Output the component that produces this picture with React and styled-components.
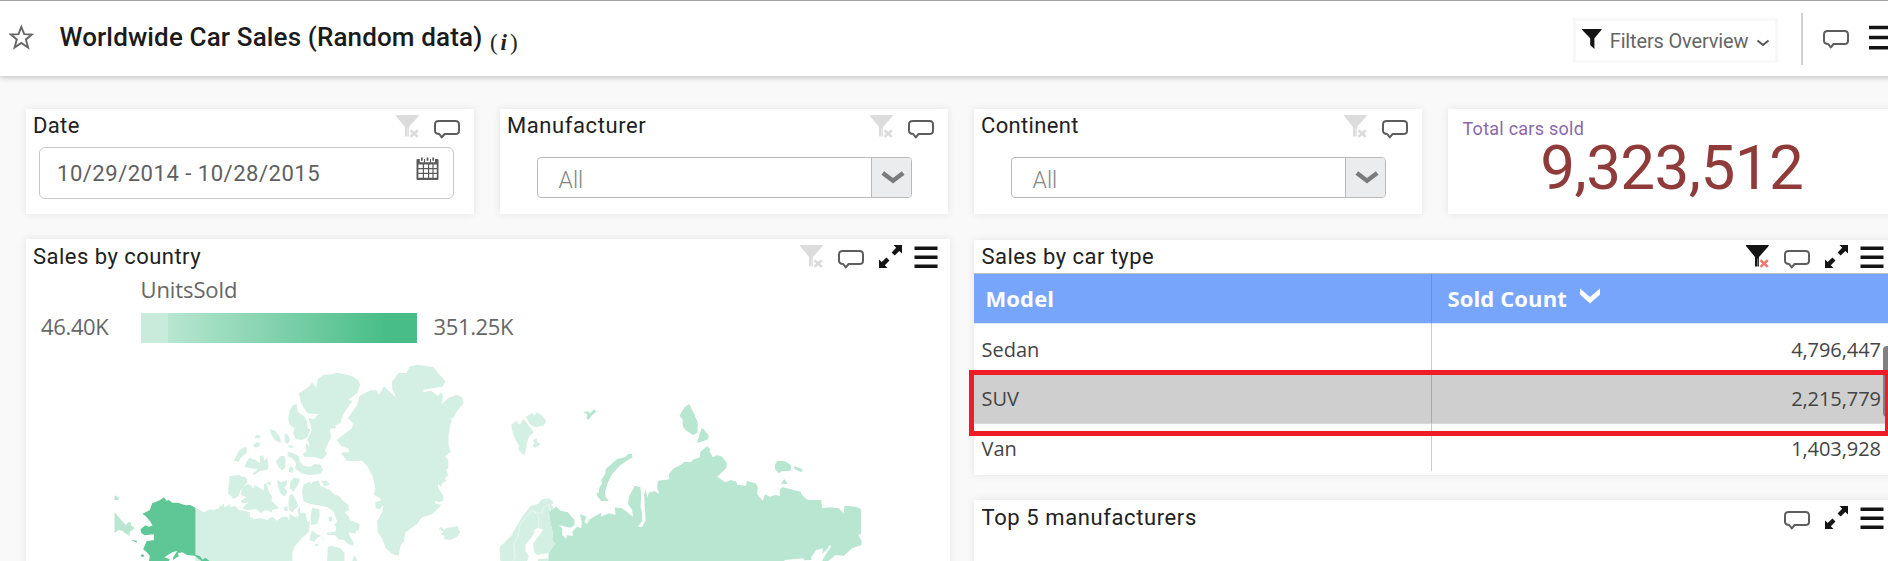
import React from 'react';
import styled, { createGlobalStyle } from 'styled-components';

const GlobalStyle = createGlobalStyle`
  * { box-sizing: border-box; }
  html, body { margin: 0; padding: 0; overflow: hidden; background: #f9f9f9; }
  body { font-family: Roboto, "Liberation Sans", sans-serif; color: #212121; }
  svg { display: block; flex: none; }
`;

const Page = styled.div`
  width: 1888px;
  height: 561px;
  overflow: hidden;
  display: flex;
  flex-direction: column;
  background: #f9f9f9;
`;

const TopBar = styled.header`
  flex: none;
  width: 1905px;
  height: 76px;
  display: flex;
  align-items: flex-start;
  padding: 0 12px 0 9px;
  background: #fff;
  border-top: 1px solid #a3a3a3;
  box-shadow: 0 2px 5px rgba(0, 0, 0, 0.2);
`;

const StarSlot = styled.div`
  margin: 23px 25.5px 0 0;
`;

const PageTitle = styled.h1`
  margin: 17px 0 0;
  flex: none;
  font-size: 26px;
  line-height: 38px;
  font-weight: 500;
  letter-spacing: 0.14px;
  color: #1b1b1b;
  white-space: nowrap;
`;

const InfoMark = styled.span`
  flex: 1;
  margin: 28px 0 0 7.5px;
  font-family: "Liberation Serif", serif;
  font-size: 23px;
  line-height: 28px;
  letter-spacing: 3px;
  color: #222;
  em { font-weight: 700; }
`;

const FiltersButton = styled.button`
  margin: 17px 23px 0 0;
  width: 205px;
  height: 45px;
  padding: 0 5px 0 6px;
  display: flex;
  align-items: center;
  gap: 6px;
  border: 3px solid #f8f8f8;
  background: #fff;
  font: 400 20px/24px Roboto, sans-serif;
  letter-spacing: -0.16px;
  color: #666;
  white-space: nowrap;
`;

const FiltersLabel = styled.span`
  flex: 1;
  padding-top: 1px;
`;

const ChevronSlot = styled.span`
  padding-top: 4px;
`;

const FunnelSlot = styled.span`
  padding-bottom: 3px;
`;

const Divider = styled.div`
  width: 2px;
  height: 52px;
  margin: 12px 20px 0 0;
  background: #d2d2d2;
`;

const BarIcon = styled.div`
  margin: ${(p) => p.$top}px ${(p) => p.$right || 0}px 0 0;
`;

const Board = styled.main`
  flex: 1;
  display: flex;
  flex-direction: column;
  gap: 25px;
  padding: 33px 0 0 25.5px;
  width: 1905px;
`;

const CardRow = styled.section`
  display: flex;
  align-items: flex-start;
  gap: ${(p) => p.$gap}px;
`;

const Stack = styled.div`
  display: flex;
  flex-direction: column;
  gap: 25px;
  padding-top: 1px;
`;

const Card = styled.article`
  flex: none;
  width: ${(p) => p.$width}px;
  height: ${(p) => p.$height}px;
  background: #fff;
  box-shadow: 0 0 8px rgba(0, 0, 0, 0.09);
`;

const CardHead = styled.div`
  display: flex;
  align-items: flex-start;
  height: ${(p) => p.$height || 34}px;
  padding: 0 ${(p) => p.$right || 12}px 0 7.5px;
`;

const CardTitle = styled.h2`
  flex: 1;
  margin: 0;
  padding-top: ${(p) => p.$shift || 0}px;
  font-size: 22px;
  line-height: 33px;
  font-weight: 400;
  letter-spacing: ${(p) => p.$track || 0.35}px;
  white-space: nowrap;
`;

const IconSlot = styled.div`
  margin: ${(p) => p.$top}px 0 0 ${(p) => p.$left || 0}px;
`;

const DateField = styled.div`
  margin: 4px 20px 0 13.5px;
  height: 52px;
  display: flex;
  align-items: flex-start;
  justify-content: space-between;
  padding: 9px 14px 0 17px;
  border: 1.5px solid #c9c9c9;
  border-radius: 6px;
  font-size: 22px;
  line-height: 34px;
  letter-spacing: 0.52px;
  color: #606060;
`;

const SelectField = styled.div`
  margin: 14px 36px 0 37px;
  height: 41px;
  display: flex;
  border: 1.5px solid #b9b9b9;
  border-radius: 4px;
  overflow: hidden;
`;

const SelectValue = styled.span`
  flex: 1;
  padding: 2px 0 0 21px;
  font-size: 23px;
  line-height: 41px;
  font-weight: 300;
  color: #858585;
`;

const SelectToggle = styled.span`
  width: 40px;
  padding: 13px 0 0 9px;
  border-left: 1.5px solid #b9b9b9;
  background: #ebecee;
`;

const KpiCaption = styled.div`
  padding: 9px 0 0 15px;
  font-size: 18px;
  line-height: 22px;
  letter-spacing: 0.25px;
  color: #8a69ab;
`;

const KpiValue = styled.div`
  font-size: 62px;
  line-height: 56px;
  text-align: center;
  letter-spacing: -0.6px;
  color: #8f3b3a;
`;

const Legend = styled.div`
  font-family: "Open Sans", "Noto Sans", sans-serif;
  font-size: 22px;
  color: #666;
  padding-left: 15px;
`;

const LegendName = styled.div`
  padding-left: 100px;
  line-height: 30px;
  height: 40px;
  padding-top: 1px;
  letter-spacing: -0.1px;
`;

const LegendScale = styled.div`
  display: flex;
  align-items: center;
  height: 30px;
`;

const ScaleEnd = styled.span`
  width: ${(p) => p.$width}px;
  padding-left: ${(p) => p.$inset || 0}px;
  line-height: 30px;
  padding-bottom: 4px;
  letter-spacing: -0.35px;
`;

const ScaleBar = styled.span`
  width: 276px;
  height: 30px;
  margin-right: 17px;
  background: linear-gradient(
    90deg,
    #c8ebdb 0 27px,
    #b8e6d1 27px,
    #48bd87 245px
  );
`;

const MapArea = styled.div`
  padding-top: 7px;
`;

const Table = styled.div`
  position: relative;
  display: grid;
  grid-template-columns: 457.5px 1fr;
  border-top: 1px solid #bcc0c4;
  font-family: "Open Sans", "Noto Sans", sans-serif;
`;

const HeadCell = styled.div`
  display: flex;
  align-items: flex-start;
  height: 50px;
  padding: 0 0 0 ${(p) => p.$pad}px;
  background: #78a5fc;
  border-right: ${(p) => (p.$edge ? '1px solid #6690e2' : '0')};
  border-bottom: 1px solid #dbe9ff;
  color: #fff;
  font-size: 22px;
  line-height: 48px;
  font-weight: 700;
  letter-spacing: 0.12px;
`;

const Cell = styled.div`
  height: ${(p) => p.$height || 50}px;
  padding: ${(p) => p.$drop}px 15px 0 7.5px;
  text-align: ${(p) => (p.$numeric ? 'right' : 'left')};
  background: ${(p) => (p.$selected ? '#cfcfcf' : '#fff')};
  border-right: ${(p) => (p.$numeric ? '0' : p.$selected ? '1px solid #aaa' : '1px solid #ccc')};
  border-bottom: ${(p) => (p.$selected ? '1.5px solid #d9d9d9' : '0')};
  font-size: 20px;
  line-height: 30px;
  letter-spacing: ${(p) => (p.$numeric ? '-0.06px' : '0')};
  color: #444;
`;

const ScrollThumb = styled.div`
  position: absolute;
  top: 72px;
  right: 0;
  width: 13px;
  height: 71px;
  border-radius: 4px;
  background: #808080;
`;

const Highlight = styled.div`
  position: absolute;
  left: -5px;
  top: 96px;
  width: 921px;
  height: 66px;
  border: 5px solid #ee1c24;
`;

const StarIcon = () => (
  <svg width="25" height="26" viewBox="0 0 25 26">
    <path d="M12.3 2.8L15.2 10.2L22.8 10.5L16.9 15.4L19.1 23.6L12.3 19L5.6 23.6L7.8 15.4L1.9 10.5L9.5 10.2Z" fill="none" stroke="#666" strokeWidth="1.9" />
  </svg>
);

const CommentIcon = () => (
  <svg width="26" height="19" viewBox="0 0 26 19">
    <path d="M5 1H21.3Q25 1 25 4.4V10.7Q25 14 21.3 14H10.6L7.8 17.4L5.2 14Q1 13.7 1 10.7V4.4Q1 1 5 1Z" fill="none" stroke="#5d5d5d" strokeWidth="2" strokeLinejoin="round" />
  </svg>
);

const MenuIcon = () => (
  <svg width="24" height="25" viewBox="0 0 24 25">
    <path d="M0.5 2.3H23.5M0.5 11.3H23.5M0.5 20.3H23.5" stroke="#141414" strokeWidth="3.6" />
  </svg>
);

const WideMenuIcon = () => (
  <svg width="24" height="26" viewBox="0 0 24 26">
    <path d="M0 2.5H24M0 12.5H24M0 22.7H24" stroke="#141414" strokeWidth="3.6" />
  </svg>
);

const ExpandIcon = () => (
  <svg width="23" height="23" viewBox="0 0 23 23">
    <path d="M14.5 0H23V8.5L20.3 6L15.7 10.6L12.6 7.5L17.2 2.8Z" fill="#141414" />
    <path d="M8.5 23H0V14.5L2.7 17L7.4 12.4L10.5 15.5L5.8 20.2Z" fill="#141414" />
  </svg>
);

const ClearFilterIcon = ({ active }) => (
  <svg width="23" height="23" viewBox="0 0 23 23">
    <path d="M0 0H22.7V1L13 12V21.5H9V12L0 1Z" fill={active ? '#141414' : '#dcdcdc'} />
    <path d="M13 14H23V23H13Z" fill="#fff" />
    <path d="M14.5 15.3L21.8 21.9M21.8 15.3L14.5 21.9" stroke={active ? '#f0776e' : '#dadada'} strokeWidth="2.5" />
    <path d="M11.8 13.5V22" stroke="#fff" strokeOpacity="0.55" strokeWidth="1" />
  </svg>
);

const FilterIcon = () => (
  <svg width="20" height="20" viewBox="0 0 20 20">
    <path d="M0 0H19.6V0.8L12.4 9.2V20L8.2 16V9.2L0 0.8Z" fill="#141414" />
  </svg>
);

const CalendarIcon = () => (
  <svg width="23" height="24" viewBox="0 0 23 24">
    <path d="M0.5 3Q0.5 2 1.5 2H3.8V5.2H8V2H9V5.2H14V2H15V5.2H19V2H21.5Q22.5 2 22.5 3V22Q22.5 23 21.5 23H1.5Q0.5 23 0.5 22Z" fill="#5a5a5a" />
    <path d="M5.8 0.5V3.8M11.5 0.5V3.8M17.2 0.5V3.8" stroke="#5a5a5a" strokeWidth="1.7" />
    <path d="M2.4 7.5H6.8V11H2.4ZM8 7.5H12V11H8ZM13.2 7.5H16.4V11H13.2ZM17.6 7.5H20.8V11H17.6ZM2.4 12.2H6.8V15.8H2.4ZM8 12.2H12V15.8H8ZM13.2 12.2H16.4V15.8H13.2ZM17.6 12.2H20.8V15.8H17.6ZM2.4 17H6.8V20.7H2.4ZM8 17H12V20.7H8ZM13.2 17H16.4V20.7H13.2ZM17.6 17H20.8V20.7H17.6Z" fill="#fff" />
  </svg>
);

const SmallChevron = () => (
  <svg width="14" height="8" viewBox="0 0 14 8">
    <path d="M1.5 1.5L7 6L12.5 1.5" fill="none" stroke="#555" strokeWidth="1.9" strokeLinejoin="round" />
  </svg>
);

const SelectChevron = () => (
  <svg width="24" height="14" viewBox="0 0 24 14">
    <path d="M1.8 2L12 9.8L22.2 2" fill="none" stroke="#7b7b7b" strokeWidth="4.4" />
  </svg>
);

const SortChevron = () => (
  <svg width="20" height="16" viewBox="0 0 20 16">
    <path d="M0 0.5L10 9L20 0.5V6.5L10 15.5L0 6.5Z" fill="#fff" />
  </svg>
);

const SalesMap = () => (
  <svg width="924" height="211" viewBox="0 0 924 211">
    <g transform="translate(64.5 0) scale(0.33333)">
      <g fill="#d4efe4">
        <path d="M904 97L925 68L948 70L957 50L978 44L1028 51L1065 95L1055 110L998 119L1000 126L1022 122L1042 137L1052 127L1057 140L1053 163L1075 143L1098 134L1115 142L1119 160L1095 190L1088 205L1072 206L1083 208L1074 255L1074 285L1080 307L1063 318L1073 330L1073 355L1066 360L1074 375L1063 385L1068 392L1055 400L1052 410L1042 402L1043 415L1058 437L1059 453L1042 457L1035 452L1033 460L1053 465L1025 493L993 503L980 522L945 547L940 575L930 585L925 617L905 612L885 593L876 567L862 545L860 513L875 487L879 465L866 478L855 475L855 455L872 452L868 443L850 435L855 415L846 378L832 350L815 332L769 333L751 308L777 306L775 296L752 288L738 270L785 235L787 220L772 205L800 165L807 138L840 121L858 121L865 135L881 109L895 122L917 143L906 118Z" />
        <path d="M625 130L655 110L665 97L677 115L682 88L700 74L722 73L742 68L785 78L805 92L809 105L800 130L772 150L786 152L758 193L750 218L733 228L738 234L718 237L722 262L712 282L704 300L710 312L695 328L672 322L640 320L637 310L648 305L646 280L660 292L650 270L664 240L654 205L672 206L684 192L650 190L632 160Z" />
        <path d="M618 163L622 185L640 198L650 215L652 235L660 238L650 262L635 270L615 268L608 250L612 235L598 225L593 205L598 180L608 165Z" />
        <path d="M492 263L500 253L510 258L507 265ZM487 287L497 276L508 278L507 288L496 293ZM537 237L555 243L567 258L572 279L555 272L545 258ZM582 250L592 254L599 270L592 283L583 275ZM594 285L610 288L605 294L595 292Z" />
        <path d="M430 332L445 303L456 294L469 290L468 308L452 322L444 335ZM462 352L468 335L477 324L495 330L508 340L508 318L518 316L522 332L530 322L534 345L530 360L510 362L490 375L487 370L502 358ZM556 335L569 319L582 318L585 328L584 355L573 361L565 352ZM595 355L603 347L609 358L605 368L595 365Z" />
        <path d="M592 305L607 310L625 318L628 335L640 348L660 350L672 342L690 344L697 358L690 372L655 375L630 368L613 355L617 340L605 325L592 318Z" />
        <path d="M418 378L445 375L454 380L464 380L472 395L450 420L445 437L430 447L412 430Z" />
        <path d="M455 412L472 402L485 408L488 418L492 405L505 412L520 422L520 402L528 400L535 425L545 440L543 452L565 475L545 480L545 487L525 480L510 489L498 478L470 480L455 475L472 458L452 460L452 452L468 442L450 435Z" />
        <path d="M528 398L542 394L538 408ZM558 390L572 397L590 390L588 405L582 412L590 425L583 440L570 430L565 415ZM600 395L610 383L629 387L622 405L608 425L598 415ZM598 435L607 432L622 462L622 472L612 478L605 488L595 478L594 455ZM579 475L590 468L593 482L582 482Z" />
        <path d="M634 425L640 403L655 395L663 402L666 395L685 392L690 408L700 412L718 420L730 432L748 440L757 452L772 463L776 480L762 487L775 500L778 510L808 522L805 540L795 545L798 551L775 547L778 560L790 580L787 587L768 580L762 570L745 568L733 555L708 555L710 548L735 545L737 530L730 525L740 515L735 500L730 485L712 472L695 468L660 462L640 455Z" />
        <path d="M693 392L708 392L718 405L702 409ZM665 473L687 478L687 500L680 522L662 525L660 500ZM714 502L724 498L726 512L717 515ZM656 570L660 555L664 541L678 552L693 557L680 563L672 575ZM672 584L682 580L684 587L674 588ZM694 565L698 563L697 571ZM710 633L712 590L725 588L750 595L762 610L762 633ZM785 633L792 615L801 633Z" />
        <path d="M315 473L340 487L360 478L370 480L385 475L388 465L392 470L398 460L403 472L418 462L420 472L435 468L445 480L465 483L478 487L478 500L492 507L510 505L530 510L545 500L560 512L575 500L590 500L597 512L597 490L612 502L625 498L620 480L628 472L630 490L645 488L650 515L658 515L655 545L635 563L612 590L605 610L606 633H315Z" />
        <path d="M1045 538L1052 530L1060 540L1070 533L1085 532L1103 528L1104 540L1110 545L1100 560L1080 570L1060 567L1062 557L1048 552L1060 546Z" />
      </g>
      <path fill="#5fc795" d="M314 473L300 465L285 466L262 458L245 458L235 450L228 452L220 442L205 452L185 460L178 480L155 492L165 498L180 515L186 527L175 530L165 526L150 538L152 548L162 556L190 553L190 570L168 574L158 598L170 608L178 617L175 633H235L238 628L222 622L245 607L260 603L248 622L248 630L265 618L262 610L275 607L290 615L312 617L333 633H357L345 623L336 629L328 618L314 614ZM122 569L138 572L140 578L130 574ZM150 615L158 613L162 620L153 620Z" />
      <path stroke="#a9ddc4" strokeWidth="3" d="M315 474V614" />
      <path fill="#b8e6d1" d="M72 487L98 517L105 525L115 515L122 518L121 526L133 534L118 545L117 558L105 550L95 542L85 540L72 548ZM72 437L77 437L80 441L86 443L82 450L72 450Z" />
    </g>
    <g transform="translate(454.5 0) scale(0.33333)">
      <path fill="#d4efe4" d="M92 225L107 212L115 223L122 222L125 209L132 210L160 247L145 260L138 285L134 313L127 313L113 298L117 288L105 270L97 250ZM136 200L155 190L163 197L168 187L185 196L197 212L190 226L165 232L150 224ZM158 270L168 265L170 275L180 283L165 294L156 288L162 282Z" />
      <path fill="#d4efe4" d="M57 592L92 557L125 500L150 468L172 462L185 448L205 445L220 457L212 465L220 470L205 483L210 520L218 550L215 570L225 580L203 610L170 615L160 605L158 580L185 545L186 538L172 534L160 540L162 550L135 585L135 605L145 618L140 633H60ZM172 628L200 625L205 633H172Z" />
      <path fill="#b8e6d1" d="M308 187L320 184L330 190L340 178L348 185L335 195L325 209L318 207L320 193ZM597 197L612 172L626 162L640 190L652 218L651 248L637 255L615 240L607 230L606 208ZM663 234L670 238L685 257L683 268L649 280ZM348 430L355 427L357 412L365 400L362 390L375 370L375 358L410 327L432 322L445 311L455 312L456 322L420 345L395 372L383 395L373 425L375 440L385 453L362 453L350 438ZM883 345L890 333L912 333L932 346L930 363L905 363L895 370L884 358ZM940 348L967 358L962 367L943 358ZM902 398L912 388L923 402L902 401Z" />
      <path fill="#b8e6d1" d="M205 483L227 470L240 482L262 487L282 510L282 525L270 533L235 525L245 535L245 555L257 567L260 555L278 558L275 545L290 530L302 534L304 515L298 492L318 500L312 515L320 522L327 508L362 488L362 500L385 490L405 495L403 472L425 475L457 500L455 480L443 463L445 440L463 407L480 412L482 440L480 470L485 490L485 512L472 530L485 530L495 512L494 485L490 450L487 430L495 410L500 443L505 428L522 423L537 433L530 415L532 392L567 388L565 372L580 355L600 345L612 335L630 337L640 328L658 322L660 305L680 289L690 298L687 304L697 322L710 315L725 320L739 340L737 355L710 380L735 397L752 390L768 395L770 405L797 407L799 393L825 400L832 412L830 432L847 453L853 433L868 440L885 435L898 438L898 420L905 411L960 425L967 438L982 450L1022 450L1025 475L1050 472L1075 475L1090 490L1092 467L1125 470L1142 477L1142 550L1134 556L1143 572V585L1115 595L1090 617L1065 615L1043 633H1025L1035 615L1053 587L1045 587L1042 596L1025 611L1028 595L1007 600L993 620L992 630L970 631V625L912 630V633H203L205 608L225 580L215 570L218 550L210 520Z" />
      <path fill="none" stroke="#fff" strokeWidth="4" d="M496 408L489 435L490 455L488 485" />
      <path fill="none" stroke="#eef9f4" strokeWidth="2.5" d="M96 633L104 625L100 580L112 560L120 520L150 486L157 483L175 500L175 535M157 483L183 492L190 470L205 463L210 485" />
    </g>
  </svg>
);

const FilterCard = ({ title, track, children }) => (
  <Card $width={448.5} $height={105}>
    <CardHead $right={14}>
      <CardTitle $track={track}>{title}</CardTitle>
      <IconSlot $top={6}><ClearFilterIcon /></IconSlot>
      <IconSlot $top={11} $left={15}><CommentIcon /></IconSlot>
    </CardHead>
    {children}
  </Card>
);

const PanelTools = ({ filter, active, lift = 0 }) => (
  <>
    {filter && <IconSlot $top={6 - lift}><ClearFilterIcon active={active} /></IconSlot>}
    <IconSlot $top={11 - lift} $left={15}><CommentIcon /></IconSlot>
    <IconSlot $top={6 - lift} $left={15}><ExpandIcon /></IconSlot>
    <IconSlot $top={6.5 - lift} $left={12}><MenuIcon /></IconSlot>
  </>
);

const Select = () => (
  <SelectField>
    <SelectValue>All</SelectValue>
    <SelectToggle><SelectChevron /></SelectToggle>
  </SelectField>
);

const rows = [
  { model: 'Sedan', count: '4,796,447', height: 50, drop: 11 },
  { model: 'SUV', count: '2,215,779', height: 50, drop: 10, selected: true },
  { model: 'Van', count: '1,403,928', height: 47, drop: 10 },
];

export default function App() {
  return (
    <Page>
      <GlobalStyle />
      <TopBar>
        <StarSlot><StarIcon /></StarSlot>
        <PageTitle>Worldwide Car Sales (Random data)</PageTitle>
        <InfoMark>(<em>i</em>)</InfoMark>
        <FiltersButton>
          <FunnelSlot><FilterIcon /></FunnelSlot>
          <FiltersLabel>Filters Overview</FiltersLabel>
          <ChevronSlot><SmallChevron /></ChevronSlot>
        </FiltersButton>
        <Divider />
        <BarIcon $top={29} $right={20}><CommentIcon /></BarIcon>
        <BarIcon $top={24}><WideMenuIcon /></BarIcon>
      </TopBar>
      <Board>
        <CardRow $gap={25.5}>
          <FilterCard title="Date">
            <DateField>
              10/29/2014 - 10/28/2015
              <CalendarIcon />
            </DateField>
          </FilterCard>
          <FilterCard title="Manufacturer" track={0.58}><Select /></FilterCard>
          <FilterCard title="Continent"><Select /></FilterCard>
          <Card $width={448.5} $height={105}>
            <KpiCaption>Total cars sold</KpiCaption>
            <KpiValue>9,323,512</KpiValue>
          </Card>
        </CardRow>
        <CardRow $gap={24}>
          <Card $width={924.5} $height={330}>
            <CardHead>
              <CardTitle $track={0.47} $shift={1}>Sales by country</CardTitle>
              <PanelTools filter />
            </CardHead>
            <Legend>
              <LegendName>UnitsSold</LegendName>
              <LegendScale>
                <ScaleEnd $width={100} $inset={0.5}>46.40K</ScaleEnd>
                <ScaleBar />
                <ScaleEnd $width={90}>351.25K</ScaleEnd>
              </LegendScale>
            </Legend>
            <MapArea><SalesMap /></MapArea>
          </Card>
          <Stack>
            <Card $width={922} $height={235}>
              <CardHead $height={33}>
                <CardTitle $track={0.45}>Sales by car type</CardTitle>
                <PanelTools filter active lift={1} />
              </CardHead>
              <Table>
                <HeadCell $pad={11.5} $edge>Model</HeadCell>
                <HeadCell $pad={16}>
                  Sold Count
                  <IconSlot $top={14} $left={13}><SortChevron /></IconSlot>
                </HeadCell>
                {rows.map((r) => (
                  <React.Fragment key={r.model}>
                    <Cell $height={r.height} $drop={r.drop} $selected={r.selected}>{r.model}</Cell>
                    <Cell $height={r.height} $drop={r.drop} $selected={r.selected} $numeric>{r.count}</Cell>
                  </React.Fragment>
                ))}
                <ScrollThumb />
                <Highlight />
              </Table>
            </Card>
            <Card $width={922} $height={120}>
              <CardHead>
                <CardTitle $track={0.6} $shift={1}>Top 5 manufacturers</CardTitle>
                <PanelTools />
              </CardHead>
            </Card>
          </Stack>
        </CardRow>
      </Board>
    </Page>
  );
}
